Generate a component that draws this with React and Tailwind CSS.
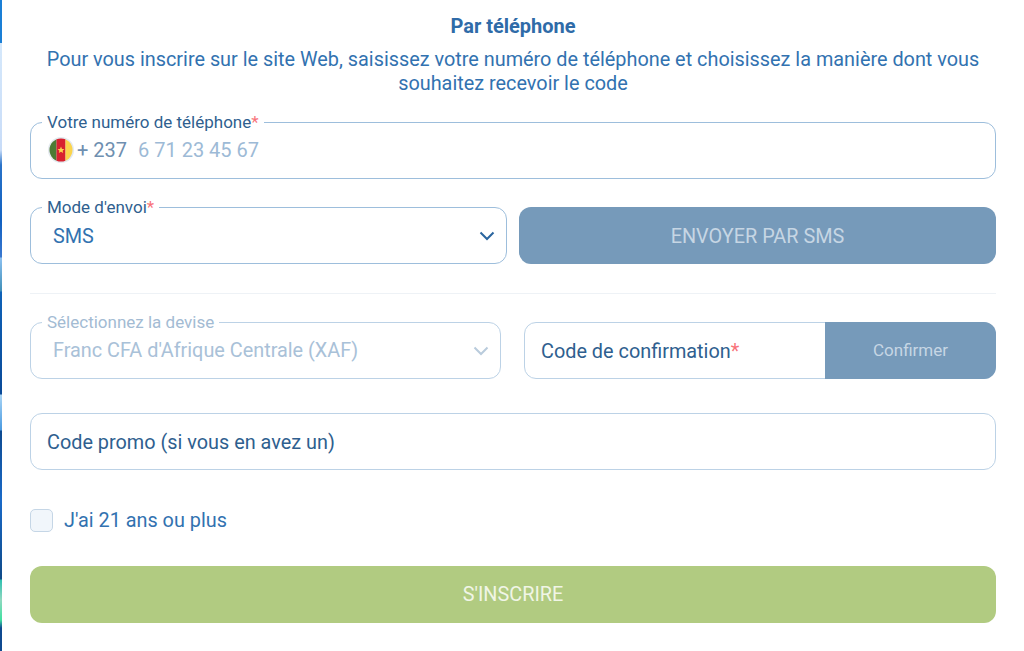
import React from "react";

function Legend({ children, muted }) {
  return (
    <span className={`absolute left-[11px] top-[-11px] bg-white px-[5px] text-[17px] leading-[20px] ${muted ? "text-[#a3bbd3]" : "text-[#2f5f8f]"}`}>
      {children}
    </span>
  );
}

function Star() {
  return <span className="text-[#f8737a]">*</span>;
}

function Chevron({ className }) {
  return (
    <svg width="16" height="10" viewBox="0 0 16 10" fill="none" className={className}>
      <path d="M1.5 1.5 L8 8 L14.5 1.5" stroke="currentColor" strokeWidth="2" />
    </svg>
  );
}

function Flag() {
  return (
    <svg width="26" height="26" viewBox="0 0 26 26">
      <circle cx="13" cy="13" r="13" fill="#e3e9ef" />
      <clipPath id="c"><circle cx="13" cy="13" r="11.5" /></clipPath>
      <g clipPath="url(#c)">
        <rect x="0" y="0" width="8.5" height="26" fill="#4c7a34" />
        <rect x="8.5" y="0" width="9" height="26" fill="#d8212f" />
        <rect x="17.5" y="0" width="9" height="26" fill="#fbd44c" />
      </g>
      <path d="M13 9.6l1 2.3 2.4.2-1.8 1.6.6 2.4-2.2-1.3-2.2 1.3.6-2.4-1.8-1.6 2.4-.2z" fill="#fbd44c" />
    </svg>
  );
}

export default function App() {
  return (
    <div className="relative h-[651px] w-[1024px] overflow-hidden bg-white font-['Roboto',sans-serif]">
      <div className="absolute left-0 top-0 h-[651px] w-[2px] bg-[linear-gradient(to_bottom,#1a7fd6_0,#1a7fd6_43px,#d5e8fb_43px,#c8dcf8_150px,#2a73c8_165px,#1060c0_220px,#3a78d0_257px,#8cc0f0_258px,#3f8fb8_291px,#0f62b8_292px,#0a4a98_394px,#a8d4f5_395px,#4a9ae0_430px,#0e4a90_431px,#1a6ac8_500px,#0f4a88_579px,#30c0b0_580px,#90d8c0_600px,#40e0a0_620px,#0f4a90_628px,#0f4a90_651px)]" />
      <div className="flex flex-col pl-[30px] pr-[28px] pt-[14px]">
        <h2 className="text-center text-[20px] font-bold leading-[24px] text-[#2f6ba8]">Par téléphone</h2>
        <p className="mt-[10px] text-center text-[19.85px] leading-[24px] text-[#3272b0]">
          Pour vous inscrire sur le site Web, saisissez votre numéro de téléphone et choisissez la manière dont vous souhaitez recevoir le code
        </p>

        <div className="relative mt-[26px] flex h-[57px] items-center rounded-[12px] border border-[#9dbedc] pb-[1px] pl-[17px] text-[20px]">
          <Legend>Votre numéro de téléphone<Star /></Legend>
          <Flag />
          <span className="ml-[3px] text-[#6f8fb0]">+ 237</span>
          <span className="ml-[11px] text-[#9dbad6]">6 71 23 45 67</span>
        </div>

        <div className="mt-[28px] flex gap-[12px]">
          <div className="relative flex h-[57px] w-[477px] items-center justify-between rounded-[12px] border border-[#9dbedc] pl-[22px] pr-[11px] text-[19.85px] text-[#3272b0]">
            <Legend>Mode d'envoi<Star /></Legend>
            <span className="pt-[2px]">SMS</span>
            <Chevron className="text-[#2a659f]" />
          </div>
          <button className="flex h-[57px] flex-1 items-center justify-center rounded-[12px] bg-[#769aba] pt-[2px] text-[19.85px] text-[#c6d6e4]">
            ENVOYER PAR SMS
          </button>
        </div>

        <div className="mt-[29px] h-px bg-[#eef2f6]" />

        <div className="mt-[28px] flex gap-[23px]">
          <div className="relative flex h-[57px] w-[471px] items-center justify-between rounded-[12px] border-[1.5px] border-[#bcd2e6] pl-[22px] pr-[11px] text-[19.85px] text-[#a9c1d8]">
            <Legend muted>Sélectionnez la devise</Legend>
            <span>Franc CFA d'Afrique Centrale (XAF)</span>
            <Chevron className="text-[#b9cbdc]" />
          </div>
          <div className="flex h-[57px] flex-1 rounded-[12px] border-[1.5px] border-[#bcd2e6]">
            <span className="flex flex-1 items-center pl-[16px] pt-[2px] text-[19.85px] text-[#2f5f8f]">Code de confirmation<Star /></span>
            <button className="my-[-1px] mr-[-1px] flex w-[171px] items-center justify-center rounded-r-[12px] bg-[#769aba] text-[17px] text-[#c6d6e4]">Confirmer</button>
          </div>
        </div>

        <div className="mt-[34px] flex h-[57px] items-center rounded-[12px] border-[1.5px] border-[#bcd2e6] pl-[16px] pt-[2px] text-[19.85px] text-[#2f5f8f]">
          Code promo (si vous en avez un)
        </div>

        <label className="mt-[36px] flex items-center gap-[11px] text-[19.85px] leading-[26px] text-[#3272b0]">
          <span className="h-[23px] w-[23px] rounded-[5px] border-[1.5px] border-[#c5d6e6] bg-[#f1f6fb]" />
          <span className="pt-[2px]">J'ai 21 ans ou plus</span>
        </label>

        <button className="mt-[32px] flex h-[57px] items-center justify-center rounded-[12px] bg-[#b1cb81] text-[19.85px] text-[#f0f5e6]">
          S'INSCRIRE
        </button>
      </div>
    </div>
  );
}
